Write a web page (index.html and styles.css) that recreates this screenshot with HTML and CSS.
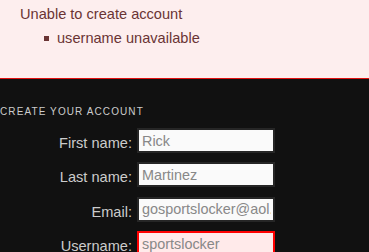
FILE: index.html
```html
<!DOCTYPE html>
<html lang="en">
<head>
    <meta charset="UTF-8">
    <meta name="viewport" content="width=device-width, initial-scale=1.0">
    <title>Create your account</title>
    <link rel="stylesheet" href="styles.css">
</head>
<body>
    <!-- error message -->
    <div class="error-box">
        <p class="error-title">Unable to create account</p>
        <ul class="error-list">
            <li>username unavailable</li>
        </ul>
    </div>

    <div class="signup">
        <h4>Create your account</h4>
        <form class="signup-form" id="signupForm">
            <label for="firstName">First name:</label>
            <input type="text" id="firstName" value="Rick">

            <label for="lastName">Last name:</label>
            <input type="text" id="lastName" value="Martinez">

            <label for="email">Email:</label>
            <input type="text" id="email" value="gosportslocker@aol.com">

            <label for="username">Username:</label>
            <input type="text" id="username" class="has-error" value="sportslocker">
        </form>
    </div>
</body>
</html>
```

FILE: styles.css
```css
body {
    margin: 0;
    padding: 0;
    background-color: #111;
    font-family: 'Liberation Sans', Arial, sans-serif;
    font-size: 14.6px;
}

.error-box {
    background-color: #fdeeee;
    color: #6a3434;
    height: 79px;
    box-sizing: border-box;
    padding: 2px 0 0 20px;
    border-bottom: 1px solid #e01010;
    line-height: 24px;
}

.error-title {
    margin: 0;
}

.error-list {
    list-style: none;
    margin: 0;
    padding: 0 0 0 24px;
}

.error-list li {
    display: flex;
    align-items: center;
    gap: 8px;
}

.error-list li::before {
    content: '';
    width: 5px;
    height: 5px;
    background-color: #6a3434;
}

.signup {
    padding-top: 27px;
}

.signup h4 {
    margin: 0 0 10px 0;
    color: #ccc;
    font-size: 10px;
    font-weight: normal;
    line-height: 12px;
    letter-spacing: 1.1px;
    text-transform: uppercase;
}

.signup-form {
    display: grid;
    grid-template-columns: 132px 138px;
    column-gap: 5px;
    row-gap: 9.4px;
}

.signup-form label {
    text-align: right;
    color: #ccc;
    line-height: 17px;
    padding-top: 7px;
}

.signup-form input {
    height: 25px;
    box-sizing: border-box;
    margin: 0;
    padding: 0 2px 0 3px;
    border: 2px solid #262626;
    background-color: #fafafa;
    color: #888;
    font-family: 'Liberation Sans', Arial, sans-serif;
    font-size: 14.4px;
}

.signup-form input.has-error {
    border-color: #f00;
    background-color: #ffeaea;
}
```
